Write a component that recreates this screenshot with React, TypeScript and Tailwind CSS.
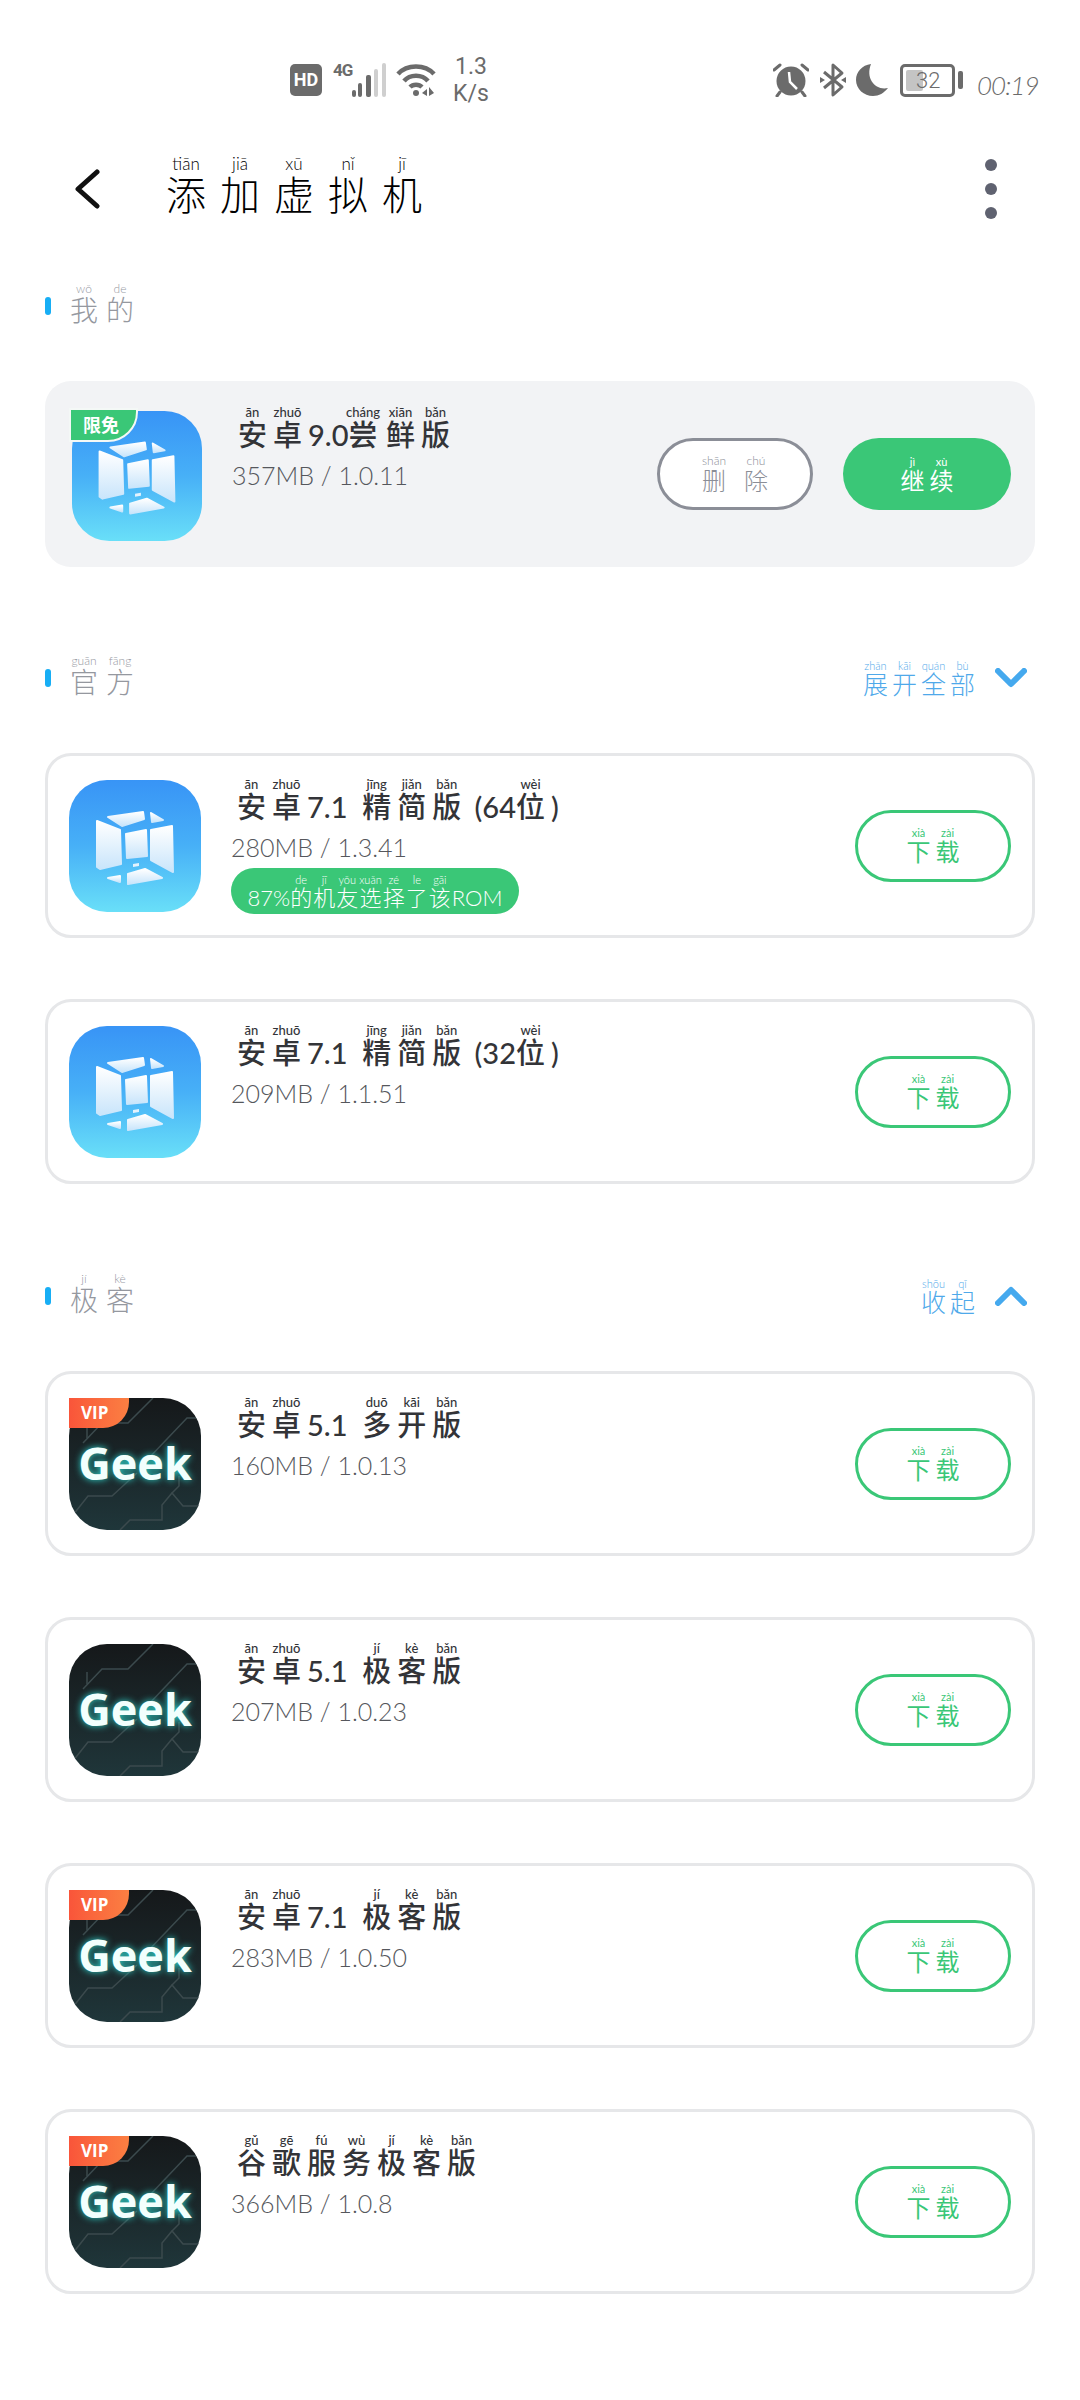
import React from 'react';

type Piece = string | [string, string];

const Ruby = ({
  parts,
  charClass,
  rtClass,
  latinClass,
}: {
  parts: Piece[];
  charClass: string;
  rtClass: string;
  latinClass?: string;
}) => (
  <span className="inline-block whitespace-nowrap">
    {parts.map((p, i) =>
      typeof p === 'string' ? (
        <span key={i} className={latinClass}>
          {p}
        </span>
      ) : (
        <ruby key={i} className={charClass}>
          {p[0]}
          <rt className={rtClass}>{p[1]}</rt>
        </ruby>
      ),
    )}
  </span>
);

const VmIcon = () => (
  <svg viewBox="0 0 132 132" className="w-full h-full block">
    <defs>
      <linearGradient id="vmbg" x1="0" y1="0" x2="0" y2="1">
        <stop offset="0" stopColor="#3894f6" />
        <stop offset="0.5" stopColor="#47b0f7" />
        <stop offset="1" stopColor="#69dff8" />
      </linearGradient>
      <linearGradient id="vmpanel" x1="0" y1="0" x2="0" y2="1">
        <stop offset="0" stopColor="#ffffff" />
        <stop offset="1" stopColor="#c9e5fb" />
      </linearGradient>
    </defs>
    <rect width="132" height="132" rx="38" fill="url(#vmbg)" />
    <g fill="url(#vmpanel)" stroke="url(#vmpanel)" strokeWidth="2" strokeLinejoin="round">
      <path d="M28 41 L51 50 L52 84 L31 89 L28 87 Z" />
      <path d="M57 54 L77 50 L78 76 L58 78 Z" />
      <path d="M82 50 L103 46 L104 92 L82 80 Z" />
      <path d="M39 37 L74 32 L75 39 L53 46 Z" />
      <path d="M82 33 L94 40 L83 42 Z" />
      <path d="M39 98 L51 96 L51 102 Z" />
      <path d="M59 94 L76 89 L93 98 L59 104 Z" />
    </g>
    <path d="M64 84 L70 83 L70 86 L64 87 Z" fill="#e3f2fd" />
  </svg>
);

const VmLogo = ({ free }: { free?: boolean }) =>
  free ? (
    <div className="relative w-[130px] h-[130px] flex-none mt-[4px]">
      <VmIcon />
      <div className="absolute left-[-3px] top-[-3px] w-[69px] h-[34px] bg-[#3ac777] border-2 border-[#f4f8f6] rounded-br-[30px] flex items-center pl-[12px] text-[18px] leading-none font-bold text-white">
        限免
      </div>
    </div>
  ) : (
    <div className="w-[132px] h-[132px] flex-none">
      <VmIcon />
    </div>
  );

const GeekLogo = ({ vip }: { vip?: boolean }) => (
  <div className="relative w-[132px] h-[132px] flex-none">
    <div className="relative w-full h-full rounded-[38px] overflow-hidden bg-gradient-to-b from-[#15181a] to-[#1f363a]">
      <svg viewBox="0 0 132 132" className="absolute inset-0 w-full h-full" fill="none" stroke="#3b4a4d" strokeWidth="1.5">
        <path d="M84 0 L59 25 L33 25 L14 45" />
        <path d="M128 20 L118 20 L78 62" />
        <path d="M18 28 L18 40" />
        <path d="M0 122 L19 98 L43 98 L68 75" />
        <path d="M132 108 L114 108 L103 95 L93 107 L93 122 L61 122 L51 132" />
        <path d="M103 95 L110 88 L110 78" />
      </svg>
      <div className="absolute inset-x-0 top-[35px] text-center text-[45px] leading-[60px] font-bold font-['Open_Sans',sans-serif] text-[#f2fffd] [text-shadow:0_0_7px_#2fd8cf]">
        Geek
      </div>
    </div>
    {vip && (
      <div className="absolute left-0 top-0 w-[60px] h-[30px] rounded-br-[26px] bg-gradient-to-r from-[#f9553a] to-[#fb7f42] flex items-center pl-[12px] text-[17px] leading-none font-bold text-white font-['Open_Sans',sans-serif]">
        VIP
      </div>
    )}
  </div>
);

const DownloadButton = () => (
  <button className="ml-auto w-[156px] h-[72px] rounded-full border-[3px] border-[#3ac777] text-[#3ac777] text-[24px] leading-[24px] flex items-center justify-center">
    <Ruby
      parts={[['下', 'xià'], ['载', 'zài']]}
      charClass="mr-[5px] last:mr-0"
      rtClass="text-[11px] leading-[11px]"
    />
  </button>
);

const Info = ({ title, sub, tag }: { title: Piece[]; sub: string; tag?: boolean }) => (
  <div className="ml-[30px] flex flex-col items-start">
    <div className="pl-[6px] text-[29px] leading-[30px] font-medium text-[#333438]">
      <Ruby
        parts={title}
        charClass="mr-[6px]"
        rtClass="text-[13px] leading-[13px] font-medium"
        latinClass="text-[29px]"
      />
    </div>
    <div className="mt-[11px] text-[25px] leading-[28px] font-light text-[#55575c]">{sub}</div>
    {tag && (
      <div className="mt-[7px] w-[288px] h-[46px] rounded-full bg-[#3ac777] text-white text-[22px] leading-[22px] font-light flex items-center justify-center">
        <Ruby
          parts={['87%', ['的', 'de'], ['机', 'jī'], ['友', 'yǒu'], ['选', 'xuǎn'], ['择', 'zé'], ['了', 'le'], ['该', 'gāi'], 'ROM']}
          charClass="mr-[1px]"
          rtClass="text-[11px] leading-[11px]"
        />
      </div>
    )}
  </div>
);

const Card = ({ logo, title, sub, tag }: { logo: React.ReactNode; title: Piece[]; sub: string; tag?: boolean }) => (
  <div className="mx-[45px] h-[185px] rounded-[26px] border-[3px] border-[#e6e7e9] bg-white flex items-center pl-[21px] pr-[21px]">
    {logo}
    <div className="self-start pt-[22px]">
      <Info title={title} sub={sub} tag={tag} />
    </div>
    <DownloadButton />
  </div>
);

const Chevron = ({ up }: { up?: boolean }) => (
  <svg viewBox="0 0 32 20" className="w-[32px] h-[20px]" fill="none" stroke="#45a9ee" strokeWidth="6" strokeLinecap="round" strokeLinejoin="round">
    <path d={up ? 'M3 17 L16 4 L29 17' : 'M3 3 L16 16 L29 3'} />
  </svg>
);

const SectionHead = ({ parts, action, up }: { parts: Piece[]; action?: Piece[]; up?: boolean }) => (
  <div className="h-[60px] pl-[45px] pr-[53px] flex items-center">
    <span className="w-[6px] h-[18px] rounded-full bg-[#17aef5]" />
    <span className="ml-[19px] pb-[6px] text-[28px] leading-[28px] text-[#95989f] font-light">
      <Ruby parts={parts} charClass="mr-[8px]" rtClass="text-[12px] leading-[12px]" />
    </span>
    {action && (
      <>
        <span className="ml-auto text-[25px] leading-[26px] text-[#4fa9ea] font-light">
          <Ruby parts={action} charClass="mr-[4px] last:mr-0" rtClass="text-[11px] leading-[11px]" />
        </span>
        <span className="ml-[20px]">
          <Chevron up={up} />
        </span>
      </>
    )}
  </div>
);

const StatusBar = () => (
  <div className="h-[130px] pt-[55px] pl-[290px] pr-[43px] flex items-start text-[#6b6b6b] font-['Roboto',sans-serif]">
    <div className="h-[50px] flex items-center">
      <span className="w-[32px] h-[32px] rounded-[5px] bg-[#6b6b6b] text-white text-[18px] font-bold leading-none flex items-center justify-center">
        HD
      </span>
      <div className="relative ml-[11px] w-[53px] h-[34px]">
        <svg width="53" height="34" viewBox="0 0 53 34" fill="#6b6b6b">
          <rect x="19" y="27" width="4" height="7" rx="2" />
          <rect x="25" y="20" width="4" height="14" rx="2" />
          <rect x="33" y="12" width="5" height="22" rx="2" />
          <rect x="41" y="6" width="4" height="28" rx="2" fill="#cfcfcf" />
          <rect x="49" y="0" width="4" height="34" rx="2" fill="#cfcfcf" />
        </svg>
        <span className="absolute left-0 top-[-2px] text-[17px] leading-[18px] font-bold tracking-[-1px]">4G</span>
      </div>
      <svg width="40" height="34" viewBox="0 0 40 34" className="ml-[10px]" fill="none" stroke="#6b6b6b" strokeWidth="4.5">
        <path d="M2 11 C 11 1, 29 1, 38 11" />
        <path d="M8 18 C 14 11, 26 11, 32 18" />
        <path d="M14 24 C 17 21, 23 21, 26 24" />
        <circle cx="20" cy="30" r="3" fill="#6b6b6b" stroke="none" />
        <path d="M26 30 L31 26 L31 33 Z M33 24 L33 33 L38 30 Z" fill="#6b6b6b" stroke="none" />
      </svg>
      <div className="ml-[16px] w-[38px] flex flex-col items-center text-[23px] leading-[27px]">
        <span>1.3</span>
        <span>K/s</span>
      </div>
    </div>
    <div className="ml-auto h-[50px] flex items-center">
      <svg width="36" height="34" viewBox="0 0 36 34" fill="#6b6b6b">
        <circle cx="18" cy="18" r="14.5" />
        <path d="M16 9 L17 19 L24 26" fill="none" stroke="#fff" strokeWidth="2.5" />
        <path d="M1 7 L7 2 M35 7 L29 2 M7 29 L4 33 M29 29 L32 33" stroke="#6b6b6b" strokeWidth="3" strokeLinecap="round" />
      </svg>
      <svg width="26" height="36" viewBox="0 0 26 36" className="ml-[11px]" fill="none" stroke="#6b6b6b" strokeWidth="3">
        <path d="M4 10 L22 25 L13 33 L13 3 L22 11 L4 26" strokeLinejoin="round" />
        <path d="M0 15 L5 18 L0 21 Z M26 15 L21 18 L26 21 Z" fill="#6b6b6b" stroke="none" />
      </svg>
      <svg width="32" height="34" viewBox="0 0 32 34" className="ml-[10px]" fill="#6b6b6b">
        <path d="M15 1 C 6 2, 0 9, 0 17 C 0 26, 8 33, 17 33 C 23 33, 28 30, 32 25 C 20 28, 9 16, 15 1 Z" />
      </svg>
      <div className="relative ml-[12px] flex items-center">
        <div className="w-[55px] h-[33px] rounded-[5px] border-[3px] border-[#6b6b6b]" />
        <div className="w-[5px] h-[18px] ml-[3px] rounded-[2px] bg-[#6b6b6b]" />
        <div className="absolute left-[6px] top-[6px] w-[17px] h-[21px] rounded-[2px] bg-[#c4c4c4]" />
        <span className="absolute left-[16px] top-[4px] text-[22px] leading-[26px] font-light">32</span>
      </div>
      <span className="ml-[14px] mt-[10px] w-[60px] font-['Lato',sans-serif] italic font-light text-[26px] tracking-[-1px] leading-none whitespace-nowrap">
        00:19
      </span>
    </div>
  </div>
);

const App = () => (
  <div className="w-full min-h-[2400px] bg-white font-['Lato','Noto_Sans_CJK_SC',sans-serif]">
    <StatusBar />

    <div className="h-[118px] pl-[74px] pr-[83px] flex items-center">
      <svg width="26" height="40" viewBox="0 0 26 40" fill="none" stroke="#111" strokeWidth="5" strokeLinecap="round" strokeLinejoin="round">
        <path d="M23 3 L4 20 L23 37" />
      </svg>
      <span className="ml-[66px] pb-[8px] text-[40px] leading-[40px] text-black font-light">
        <Ruby
          parts={[['添', 'tiān'], ['加', 'jiā'], ['虚', 'xū'], ['拟', 'nǐ'], ['机', 'jī']]}
          charClass="mr-[14px]"
          rtClass="text-[17px] leading-[17px]"
        />
      </span>
      <div className="ml-auto flex flex-col gap-[12px]">
        <span className="w-[12px] h-[12px] rounded-full bg-[#5f6270]" />
        <span className="w-[12px] h-[12px] rounded-full bg-[#5f6270]" />
        <span className="w-[12px] h-[12px] rounded-full bg-[#5f6270]" />
      </div>
    </div>

    <div className="mt-[28px] mb-[45px]">
      <SectionHead parts={[['我', 'wǒ'], ['的', 'de']]} />
    </div>

    <div className="mx-[45px] h-[186px] rounded-[26px] bg-[#f2f3f5] flex items-center pl-[27px] pr-[24px]">
      <VmLogo free />
      <div className="self-start pt-[25px]">
        <Info
          title={[['安', 'ān'], ['卓', 'zhuō'], '9.0', ['尝', 'cháng'], ['鲜', 'xiān'], ['版', 'bǎn']]}
          sub="357MB / 1.0.11"
        />
      </div>
      <button className="ml-auto w-[156px] h-[72px] rounded-full border-[3px] border-[#8b8e97] bg-white text-[#8b8e97] text-[24px] leading-[24px] font-light flex items-center justify-center">
        <Ruby parts={[['删', 'shān'], ['除', 'chú']]} charClass="mr-[18px] last:mr-0" rtClass="text-[12px] leading-[12px]" />
      </button>
      <button className="ml-[30px] w-[168px] h-[72px] rounded-full bg-[#3ac777] text-white text-[24px] leading-[24px] flex items-center justify-center">
        <Ruby parts={[['继', 'jì'], ['续', 'xù']]} charClass="mr-[5px] last:mr-0" rtClass="text-[11px] leading-[11px]" />
      </button>
    </div>

    <div className="mt-[81px] mb-[45px]">
      <SectionHead
        parts={[['官', 'guān'], ['方', 'fāng']]}
        action={[['展', 'zhǎn'], ['开', 'kāi'], ['全', 'quán'], ['部', 'bù']]}
      />
    </div>

    <div className="flex flex-col gap-[61px]">
      <Card
        logo={<VmLogo />}
        title={[['安', 'ān'], ['卓', 'zhuō'], '7.1\u00a0\u00a0', ['精', 'jīng'], ['简', 'jiǎn'], ['版', 'bǎn'], '\u00a0(64', ['位', 'wèi'], ')']}
        sub="280MB / 1.3.41"
        tag
      />
      <Card
        logo={<VmLogo />}
        title={[['安', 'ān'], ['卓', 'zhuō'], '7.1\u00a0\u00a0', ['精', 'jīng'], ['简', 'jiǎn'], ['版', 'bǎn'], '\u00a0(32', ['位', 'wèi'], ')']}
        sub="209MB / 1.1.51"
      />
    </div>

    <div className="mt-[82px] mb-[45px]">
      <SectionHead parts={[['极', 'jí'], ['客', 'kè']]} action={[['收', 'shōu'], ['起', 'qǐ']]} up />
    </div>

    <div className="flex flex-col gap-[61px]">
      <Card
        logo={<GeekLogo vip />}
        title={[['安', 'ān'], ['卓', 'zhuō'], '5.1\u00a0\u00a0', ['多', 'duō'], ['开', 'kāi'], ['版', 'bǎn']]}
        sub="160MB / 1.0.13"
      />
      <Card
        logo={<GeekLogo />}
        title={[['安', 'ān'], ['卓', 'zhuō'], '5.1\u00a0\u00a0', ['极', 'jí'], ['客', 'kè'], ['版', 'bǎn']]}
        sub="207MB / 1.0.23"
      />
      <Card
        logo={<GeekLogo vip />}
        title={[['安', 'ān'], ['卓', 'zhuō'], '7.1\u00a0\u00a0', ['极', 'jí'], ['客', 'kè'], ['版', 'bǎn']]}
        sub="283MB / 1.0.50"
      />
      <Card
        logo={<GeekLogo vip />}
        title={[['谷', 'gǔ'], ['歌', 'gē'], ['服', 'fú'], ['务', 'wù'], ['极', 'jí'], ['客', 'kè'], ['版', 'bǎn']]}
        sub="366MB / 1.0.8"
      />
    </div>
  </div>
);

export default App;
